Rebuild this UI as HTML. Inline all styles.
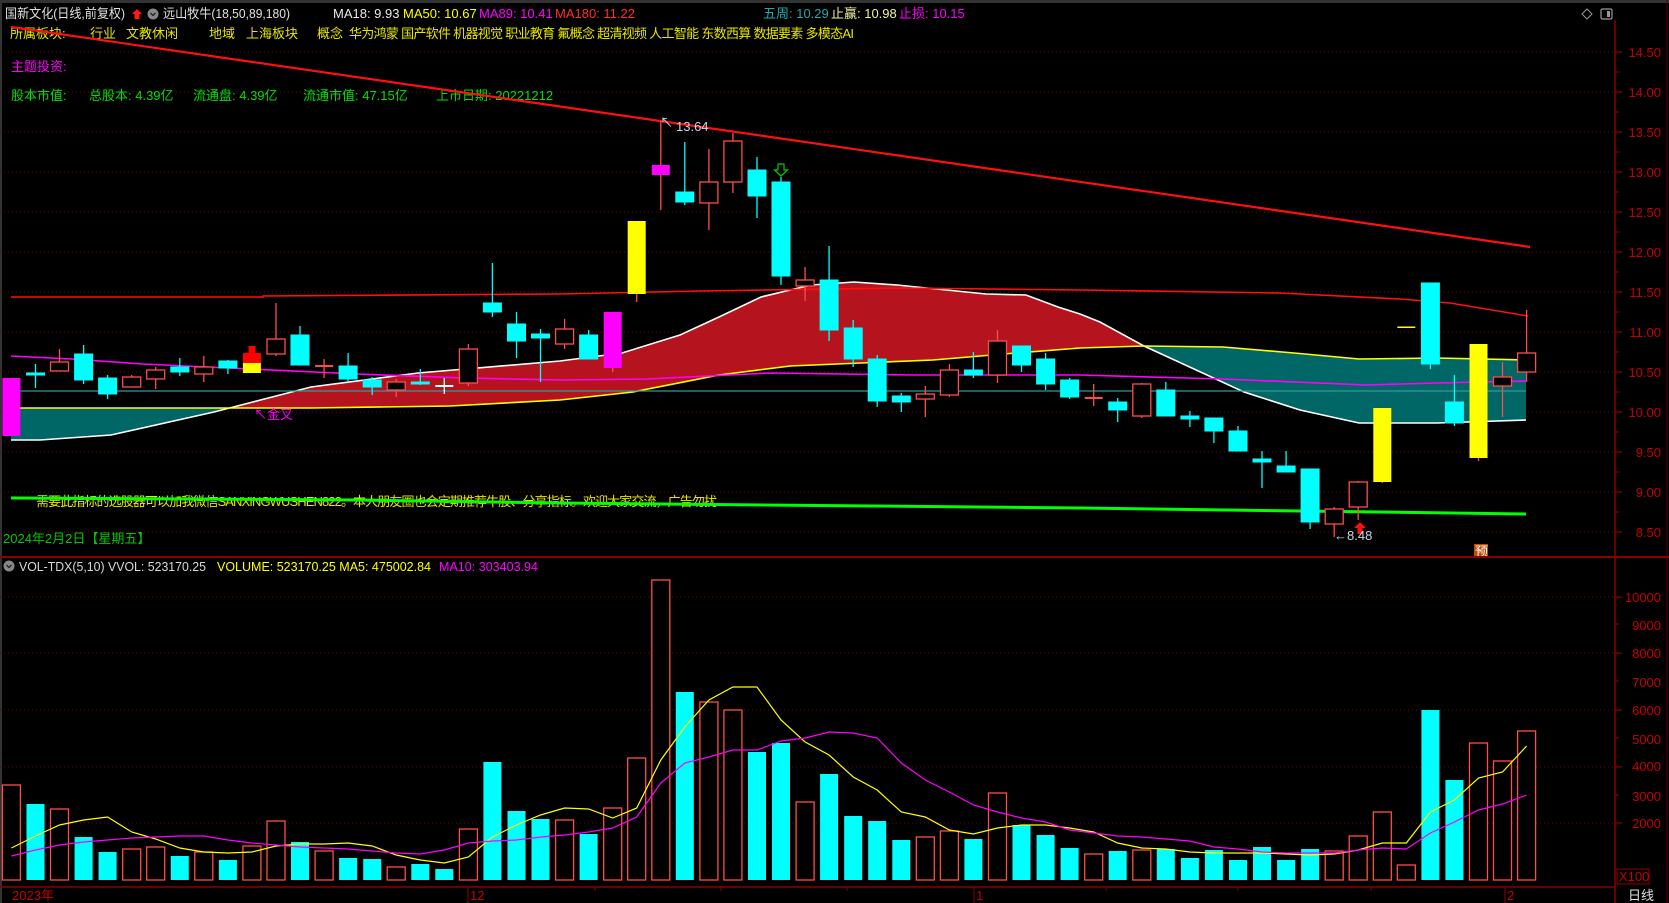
<!DOCTYPE html>
<html><head><meta charset="utf-8"><style>
html,body{margin:0;padding:0;background:#000;overflow:hidden}
svg{display:block}
text{font-family:"Liberation Sans","Noto Sans CJK SC",sans-serif;font-size:13px}
.c{fill:#00ffff;stroke:#00ffff;stroke-width:1}
.r{fill:#000;stroke:#ff4c4c;stroke-width:1.3}
.wc{stroke:#00ffff;stroke-width:1.3}
.wr{stroke:#ff4c4c;stroke-width:1.3}
.g{stroke:#7a0000;stroke-width:1;stroke-dasharray:1 3}
.lbl{fill:#c40000;font-size:14px;text-anchor:end}
</style></head><body>
<svg width="1669" height="903" viewBox="0 0 1669 903" xmlns="http://www.w3.org/2000/svg">
<rect width="1669" height="903" fill="#000"/>
<line x1="0" y1="1.5" x2="1669" y2="1.5" stroke="#333" stroke-width="3"/>
<line x1="1" y1="0" x2="1" y2="903" stroke="#333" stroke-width="2"/>

<g class="g">
<line x1="0" y1="52" x2="1613" y2="52"/><line x1="0" y1="92" x2="1613" y2="92"/><line x1="0" y1="132" x2="1613" y2="132"/><line x1="0" y1="172" x2="1613" y2="172"/><line x1="0" y1="212" x2="1613" y2="212"/><line x1="0" y1="252" x2="1613" y2="252"/><line x1="0" y1="292" x2="1613" y2="292"/><line x1="0" y1="332" x2="1613" y2="332"/><line x1="0" y1="372" x2="1613" y2="372"/><line x1="0" y1="412" x2="1613" y2="412"/><line x1="0" y1="452" x2="1613" y2="452"/><line x1="0" y1="492" x2="1613" y2="492"/><line x1="0" y1="532" x2="1613" y2="532"/>
<line x1="0" y1="597" x2="1613" y2="597"/><line x1="0" y1="653" x2="1613" y2="653"/><line x1="0" y1="710" x2="1613" y2="710"/><line x1="0" y1="767" x2="1613" y2="767"/><line x1="0" y1="823" x2="1613" y2="823"/>
</g>

<text x="5" y="18" fill="#e0e0e0" textLength="120" lengthAdjust="spacingAndGlyphs">国新文化(日线,前复权)</text>
<path d="M137 9 L142 14 L139.5 14 L139.5 19 L134.5 19 L134.5 14 L132 14 Z" fill="#ff1a1a"/>
<circle cx="153" cy="14" r="5.5" fill="#888"/><path d="M150.5 13 L153 15.5 L155.5 13" stroke="#222" stroke-width="1.3" fill="none"/>
<text x="163" y="18" fill="#e0e0e0" textLength="127" lengthAdjust="spacingAndGlyphs">远山牧牛(18,50,89,180)</text>
<text x="333" y="18" fill="#e8e8e8">MA18: 9.93</text>
<text x="403" y="18" fill="#ffff00">MA50: 10.67</text>
<text x="479" y="18" fill="#ff00ff">MA89: 10.41</text>
<text x="555" y="18" fill="#ff3030">MA180: 11.22</text>
<text x="763" y="18" fill="#22aaaa">五周: 10.29</text>
<text x="831" y="18" fill="#f0f0a0">止赢: 10.98</text>
<text x="899" y="18" fill="#ff00ff">止损: 10.15</text>
<path d="M1587 9 L1592 14 L1587 19 L1582 14 Z" fill="none" stroke="#999" stroke-width="1"/>
<rect x="1601" y="9" width="11" height="10" rx="1.5" fill="none" stroke="#999" stroke-width="1.2"/><rect x="1607" y="11" width="3" height="6" fill="#999"/>

<g fill="#e6e600">
<text x="10" y="38">所属板块:</text><text x="90" y="38">行业</text><text x="126" y="38">文教休闲</text><text x="209" y="38">地域</text><text x="246" y="38">上海板块</text><text x="317" y="38">概念</text>
<text x="349" y="38" textLength="505">华为鸿蒙 国产软件 机器视觉 职业教育 氟概念 超清视频 人工智能 东数西算 数据要素 多模态AI</text>
</g>
<text x="11" y="71" fill="#ff00ff">主题投资:</text>
<g fill="#00e000">
<text x="11" y="100">股本市值:</text><text x="89" y="100">总股本: 4.39亿</text><text x="193" y="100">流通盘:  4.39亿</text><text x="303" y="100">流通市值:  47.15亿</text><text x="436" y="100">上市日期: 20221212</text>
</g>

<clipPath id="cr"><rect x="230" y="0" width="914" height="560"/></clipPath>
<clipPath id="ct"><rect x="0" y="0" width="230" height="560"/><rect x="1144" y="0" width="400" height="560"/></clipPath>
<g>
<polygon clip-path="url(#ct)" fill="#006666" points="11,440 40,440 111,435 214,412 311,387 418,373 560,361 622,353 680,335 719,317 761,297 811,285 854,282 897,285 986,294 1026,295 1058,307 1080,314 1100,322 1144,346 1244,392 1300,410 1359,423 1437,423 1526,420 1526,360 1437,358 1359,359 1294,353 1223,347 1144,346 1080,348 1004,354 933,360 861,363 790,366 719,375 633,392 560,400 450,406 311,408 11,408"/>
<polygon clip-path="url(#cr)" fill="#b5141e" points="11,440 40,440 111,435 214,412 311,387 418,373 560,361 622,353 680,335 719,317 761,297 811,285 854,282 897,285 986,294 1026,295 1058,307 1080,314 1100,322 1144,346 1244,392 1300,410 1359,423 1437,423 1526,420 1526,360 1437,358 1359,359 1294,353 1223,347 1144,346 1080,348 1004,354 933,360 861,363 790,366 719,375 633,392 560,400 450,406 311,408 11,408"/>
</g>
<polyline fill="none" stroke="#ffffff" stroke-width="1.6" points="11,440 40,440 111,435 214,412 311,387 418,373 560,361 622,353 680,335 719,317 761,297 811,285 854,282 897,285 986,294 1026,295 1058,307 1080,314 1100,322 1144,346 1244,392 1300,410 1359,423 1437,423 1526,420"/>
<polyline fill="none" stroke="#ffff00" stroke-width="1.6" points="11,408 311,408 450,406 560,400 633,392 719,375 790,366 861,363 933,360 1004,354 1080,348 1144,346 1223,347 1294,353 1359,359 1437,358 1526,360"/>
<polyline fill="none" stroke="#ff00ff" stroke-width="1.6" points="11,356 71,359 143,364 250,369 357,374 464,378 560,380 647,379 769,373 915,375 1080,375 1223,379 1366,385 1437,383 1526,381"/>
<line x1="11" y1="391" x2="1526" y2="391" stroke="#2a9d9d" stroke-width="1.3"/>
<polyline fill="none" stroke="#ff1010" stroke-width="1.6" points="11,297 263,297 263,296 560,294 700,291 900,288 1080,290 1280,293 1400,299 1450,303 1528,316"/>
<line x1="11" y1="27" x2="1530" y2="247" stroke="#ff1010" stroke-width="2.2"/>

<text x="36" y="506" fill="#e6e600" textLength="681">需要此指标的选股器可以加我微信SANXINGWUSHEN822。本人朋友圈也会定期推荐牛股、分享指标。欢迎大家交流，广告勿扰</text>
<polyline fill="none" stroke="#00ff00" stroke-width="3" points="11,498 357,500 560,503 1080,508 1300,511 1526,514"/>
<text x="3" y="543" fill="#00c800">2024年2月2日【星期五】</text>
<text x="254" y="419" fill="#ff00ff">↖金叉</text>

<rect x="2.4" y="378" width="18" height="58" fill="#ff00ff"/>
<line class="wc" x1="35.5" y1="364" x2="35.5" y2="388"/><rect class="c" x="26.5" y="373" width="18" height="2"/>
<line class="wr" x1="59.5" y1="349" x2="59.5" y2="371"/><rect class="r" x="50.5" y="362" width="18" height="9"/>
<line class="wc" x1="83.6" y1="345" x2="83.6" y2="384"/><rect class="c" x="74.6" y="354" width="18" height="26"/>
<line class="wc" x1="107.6" y1="375" x2="107.6" y2="399"/><rect class="c" x="98.6" y="378" width="18" height="16"/>
<line class="wr" x1="131.7" y1="375" x2="131.7" y2="387"/><rect class="r" x="122.7" y="377" width="18" height="10"/>
<line class="wr" x1="155.7" y1="367" x2="155.7" y2="389"/><rect class="r" x="146.7" y="370" width="18" height="9"/>
<line class="wc" x1="179.8" y1="358" x2="179.8" y2="376"/><rect class="c" x="170.8" y="367" width="18" height="5"/>
<line class="wr" x1="203.8" y1="356" x2="203.8" y2="382"/><rect class="r" x="194.8" y="367" width="18" height="7"/>
<line class="wc" x1="227.9" y1="360" x2="227.9" y2="374"/><rect class="c" x="218.9" y="361" width="18" height="7"/>
<rect x="248.5" y="346" width="7" height="7" fill="#ff0000"/><rect x="242.9" y="353" width="18" height="10" fill="#ff0000"/><rect x="242.9" y="363" width="18" height="10" fill="#ffff00"/>
<line class="wr" x1="276" y1="303" x2="276" y2="356"/><rect class="r" x="267" y="339" width="18" height="15"/>
<line class="wc" x1="300" y1="326" x2="300" y2="365"/><rect class="c" x="291" y="335" width="18" height="30"/>
<line class="wr" x1="324.1" y1="359" x2="324.1" y2="378"/><rect x="315.1" y="365" width="18" height="2" fill="#ff4c4c"/>
<line class="wc" x1="348.1" y1="353" x2="348.1" y2="382"/><rect class="c" x="339.1" y="366" width="18" height="13"/>
<line class="wc" x1="372.2" y1="377" x2="372.2" y2="395"/><rect class="c" x="363.2" y="380" width="18" height="7"/>
<line class="wr" x1="396.2" y1="379" x2="396.2" y2="397"/><rect class="r" x="387.2" y="382" width="18" height="8"/>
<line class="wc" x1="420.3" y1="369" x2="420.3" y2="385"/><rect class="c" x="411.3" y="382" width="18" height="2"/>
<line stroke="#fff" stroke-width="1.3" x1="444.3" y1="378" x2="444.3" y2="394"/><rect x="435.3" y="385" width="18" height="2" fill="#fff"/>
<line class="wr" x1="468.4" y1="344" x2="468.4" y2="386"/><rect class="r" x="459.4" y="349" width="18" height="34"/>
<line class="wc" x1="492.4" y1="263" x2="492.4" y2="317"/><rect class="c" x="483.4" y="303" width="18" height="9"/>
<line class="wc" x1="516.5" y1="312" x2="516.5" y2="358"/><rect class="c" x="507.5" y="324" width="18" height="17"/>
<line class="wc" x1="540.5" y1="329" x2="540.5" y2="382"/><rect class="c" x="531.5" y="334" width="18" height="4"/>
<line class="wr" x1="564.6" y1="319" x2="564.6" y2="349"/><rect class="r" x="555.6" y="329" width="18" height="15"/>
<line class="wc" x1="588.6" y1="330" x2="588.6" y2="359"/><rect class="c" x="579.6" y="335" width="18" height="24"/>
<line stroke="#ff4c4c" stroke-width="1.3" x1="612.7" y1="312" x2="612.7" y2="372"/><rect x="603.7" y="312" width="18" height="56" fill="#ff00ff"/>
<line class="wr" x1="636.7" y1="221" x2="636.7" y2="302"/><rect x="627.7" y="221" width="18" height="73" fill="#ffff00"/>
<line class="wr" x1="660.8" y1="121" x2="660.8" y2="210"/><rect x="651.8" y="165" width="18" height="10" fill="#ff00ff"/>
<line class="wc" x1="684.8" y1="142" x2="684.8" y2="205"/><rect class="c" x="675.8" y="192" width="18" height="10"/>
<line class="wr" x1="708.9" y1="149" x2="708.9" y2="230"/><rect class="r" x="699.9" y="182" width="18" height="21"/>
<line class="wr" x1="732.9" y1="133" x2="732.9" y2="193"/><rect class="r" x="723.9" y="141" width="18" height="41"/>
<line class="wc" x1="757" y1="157" x2="757" y2="218"/><rect class="c" x="748" y="170" width="18" height="26"/>
<line class="wc" x1="781" y1="177" x2="781" y2="285"/><rect class="c" x="772" y="182" width="18" height="94"/>
<line class="wr" x1="805.1" y1="267" x2="805.1" y2="301"/><rect class="r" x="796.1" y="280" width="18" height="6"/>
<line class="wc" x1="829.1" y1="246" x2="829.1" y2="341"/><rect class="c" x="820.1" y="280" width="18" height="50"/>
<line class="wc" x1="853.2" y1="320" x2="853.2" y2="367"/><rect class="c" x="844.2" y="328" width="18" height="31"/>
<line class="wc" x1="877.2" y1="355" x2="877.2" y2="407"/><rect class="c" x="868.2" y="359" width="18" height="42"/>
<line class="wc" x1="901.3" y1="393" x2="901.3" y2="412"/><rect class="c" x="892.3" y="396" width="18" height="6"/>
<line class="wr" x1="925.3" y1="386" x2="925.3" y2="417"/><rect class="r" x="916.3" y="394" width="18" height="5"/>
<line class="wr" x1="949.4" y1="364" x2="949.4" y2="397"/><rect class="r" x="940.4" y="370" width="18" height="25"/>
<line class="wc" x1="973.4" y1="352" x2="973.4" y2="378"/><rect class="c" x="964.4" y="370" width="18" height="5"/>
<line class="wr" x1="997.5" y1="330" x2="997.5" y2="383"/><rect class="r" x="988.5" y="341" width="18" height="34"/>
<line class="wc" x1="1021.5" y1="346" x2="1021.5" y2="372"/><rect class="c" x="1012.5" y="346" width="18" height="19"/>
<line class="wc" x1="1045.6" y1="353" x2="1045.6" y2="390"/><rect class="c" x="1036.6" y="359" width="18" height="25"/>
<line class="wc" x1="1069.6" y1="378" x2="1069.6" y2="399"/><rect class="c" x="1060.6" y="380" width="18" height="17"/>
<line class="wr" x1="1093.7" y1="384" x2="1093.7" y2="406"/><rect x="1084.7" y="397" width="18" height="2" fill="#ff4c4c"/>
<line class="wc" x1="1117.7" y1="398" x2="1117.7" y2="422"/><rect class="c" x="1108.7" y="402" width="18" height="8"/>
<line class="wr" x1="1141.8" y1="383" x2="1141.8" y2="418"/><rect class="r" x="1132.8" y="384" width="18" height="32"/>
<line class="wc" x1="1165.8" y1="382" x2="1165.8" y2="416"/><rect class="c" x="1156.8" y="390" width="18" height="26"/>
<line class="wc" x1="1189.9" y1="411" x2="1189.9" y2="427"/><rect class="c" x="1180.9" y="416" width="18" height="3"/>
<line class="wc" x1="1213.9" y1="418" x2="1213.9" y2="443"/><rect class="c" x="1204.9" y="418" width="18" height="13"/>
<line class="wc" x1="1238" y1="426" x2="1238" y2="451"/><rect class="c" x="1229" y="431" width="18" height="20"/>
<line class="wc" x1="1262" y1="451" x2="1262" y2="488"/><rect class="c" x="1253" y="459" width="18" height="3"/>
<line class="wc" x1="1286.1" y1="451" x2="1286.1" y2="472"/><rect class="c" x="1277.1" y="466" width="18" height="6"/>
<line class="wc" x1="1310.1" y1="469" x2="1310.1" y2="529"/><rect class="c" x="1301.1" y="469" width="18" height="53"/>
<line class="wr" x1="1334.2" y1="507" x2="1334.2" y2="537"/><rect class="r" x="1325.2" y="509" width="18" height="15"/>
<line class="wr" x1="1358.2" y1="481" x2="1358.2" y2="520"/><rect class="r" x="1349.2" y="482" width="18" height="25"/>
<line class="wr" x1="1382.3" y1="408" x2="1382.3" y2="483"/><rect x="1373.3" y="408" width="18" height="74" fill="#ffff00"/>
<rect x="1397.3" y="326.5" width="18" height="1.5" fill="#ffff00"/>
<line class="wc" x1="1430.4" y1="283" x2="1430.4" y2="369"/><rect class="c" x="1421.4" y="283" width="18" height="81"/>
<line class="wc" x1="1454.4" y1="375" x2="1454.4" y2="426"/><rect class="c" x="1445.4" y="402" width="18" height="21"/>
<line class="wr" x1="1478.5" y1="344" x2="1478.5" y2="461"/><rect x="1469.5" y="344" width="18" height="114" fill="#ffff00"/>
<line class="wr" x1="1502.5" y1="362" x2="1502.5" y2="417"/><rect class="r" x="1493.5" y="377" width="18" height="9"/>
<line class="wr" x1="1526.6" y1="310" x2="1526.6" y2="382"/><rect class="r" x="1517.6" y="353" width="18" height="19"/>

<text x="660" y="127" fill="#c8d4e8" font-size="12">↖</text><text x="676" y="131" fill="#c8d4e8">13.64</text>
<path d="M778 164 L784 164 L784 170 L787.5 170 L781 176 L774.5 170 L778 170 Z" fill="none" stroke="#00cc00" stroke-width="1.2"/>
<path d="M1360 522 L1366 528 L1362.5 528 L1362.5 534 L1357.5 534 L1357.5 528 L1354 528 Z" fill="#ff1010"/>
<text x="1334" y="540" fill="#c8d4e8">←8.48</text>
<rect x="1474" y="544" width="14" height="14" fill="#c04a00"/><text x="1475" y="556" fill="#fff" font-size="12">预</text>

<line x1="1615" y1="20" x2="1615" y2="903" stroke="#8b0000" stroke-width="1.5"/>
<line x1="1667" y1="0" x2="1667" y2="903" stroke="#5a0000" stroke-width="1"/>
<g stroke="#8b0000" stroke-width="1.2">
<line x1="1615" y1="52" x2="1622" y2="52"/><line x1="1615" y1="92" x2="1622" y2="92"/><line x1="1615" y1="132" x2="1622" y2="132"/><line x1="1615" y1="172" x2="1622" y2="172"/><line x1="1615" y1="212" x2="1622" y2="212"/><line x1="1615" y1="252" x2="1622" y2="252"/><line x1="1615" y1="292" x2="1622" y2="292"/><line x1="1615" y1="332" x2="1622" y2="332"/><line x1="1615" y1="372" x2="1622" y2="372"/><line x1="1615" y1="412" x2="1622" y2="412"/><line x1="1615" y1="452" x2="1622" y2="452"/><line x1="1615" y1="492" x2="1622" y2="492"/><line x1="1615" y1="532" x2="1622" y2="532"/>
<line x1="1615" y1="72" x2="1619" y2="72"/><line x1="1615" y1="112" x2="1619" y2="112"/><line x1="1615" y1="152" x2="1619" y2="152"/><line x1="1615" y1="192" x2="1619" y2="192"/><line x1="1615" y1="232" x2="1619" y2="232"/><line x1="1615" y1="272" x2="1619" y2="272"/><line x1="1615" y1="312" x2="1619" y2="312"/><line x1="1615" y1="352" x2="1619" y2="352"/><line x1="1615" y1="392" x2="1619" y2="392"/><line x1="1615" y1="432" x2="1619" y2="432"/><line x1="1615" y1="472" x2="1619" y2="472"/><line x1="1615" y1="512" x2="1619" y2="512"/>
<line x1="1615" y1="597" x2="1622" y2="597"/><line x1="1615" y1="624" x2="1619" y2="624"/><line x1="1615" y1="653" x2="1622" y2="653"/><line x1="1615" y1="681" x2="1619" y2="681"/><line x1="1615" y1="710" x2="1622" y2="710"/><line x1="1615" y1="738" x2="1619" y2="738"/><line x1="1615" y1="767" x2="1622" y2="767"/><line x1="1615" y1="795" x2="1619" y2="795"/><line x1="1615" y1="823" x2="1622" y2="823"/>
</g>
<g class="lbl">
<text x="1661" y="57">14.50</text><text x="1661" y="97">14.00</text><text x="1661" y="137">13.50</text><text x="1661" y="177">13.00</text><text x="1661" y="217">12.50</text><text x="1661" y="257">12.00</text><text x="1661" y="297">11.50</text><text x="1661" y="337">11.00</text><text x="1661" y="377">10.50</text><text x="1661" y="417">10.00</text><text x="1661" y="457">9.50</text><text x="1661" y="497">9.00</text><text x="1661" y="537">8.50</text>
<text x="1661" y="602">10000</text><text x="1661" y="630">9000</text><text x="1661" y="658">8000</text><text x="1661" y="687">7000</text><text x="1661" y="715">6000</text><text x="1661" y="744">5000</text><text x="1661" y="771">4000</text><text x="1661" y="801">3000</text><text x="1661" y="828">2000</text>
</g>
<rect x="1617" y="869" width="32" height="15" fill="none" stroke="#8b0000" stroke-width="1"/><text x="1619" y="881" fill="#c40000" font-size="12">X100</text>

<line x1="0" y1="557" x2="1669" y2="557" stroke="#8b0000" stroke-width="2"/>

<circle cx="9" cy="566" r="5.5" fill="#888"/><path d="M6.5 565 L9 567.5 L11.5 565" stroke="#222" stroke-width="1.3" fill="none"/>
<text x="19" y="571" fill="#d8d8d8" textLength="187" lengthAdjust="spacingAndGlyphs">VOL-TDX(5,10) VVOL: 523170.25</text>
<text x="217" y="571" fill="#ffff00" textLength="214" lengthAdjust="spacingAndGlyphs">VOLUME: 523170.25 MA5: 475002.84</text>
<text x="439" y="571" fill="#ff00ff" textLength="99" lengthAdjust="spacingAndGlyphs">MA10: 303403.94</text>

<g class="r">
<rect x="2.4" y="785" width="18" height="95"/><rect x="50.5" y="809" width="18" height="71"/><rect x="122.7" y="849" width="18" height="31"/><rect x="146.7" y="847" width="18" height="33"/><rect x="194.8" y="852" width="18" height="28"/><rect x="242.9" y="846" width="18" height="34"/><rect x="267" y="821" width="18" height="59"/><rect x="315.1" y="851" width="18" height="29"/><rect x="387.2" y="867" width="18" height="13"/><rect x="459.4" y="829" width="18" height="51"/><rect x="555.6" y="820" width="18" height="60"/><rect x="603.7" y="808" width="18" height="72"/><rect x="627.7" y="758" width="18" height="122"/><rect x="651.8" y="580" width="18" height="300"/><rect x="699.9" y="702" width="18" height="178"/><rect x="723.9" y="710" width="18" height="170"/><rect x="796.1" y="802" width="18" height="78"/><rect x="916.3" y="837" width="18" height="43"/><rect x="940.4" y="831" width="18" height="49"/><rect x="988.5" y="793" width="18" height="87"/><rect x="1084.7" y="854" width="18" height="26"/><rect x="1132.8" y="850" width="18" height="30"/><rect x="1325.2" y="851" width="18" height="29"/><rect x="1349.2" y="836" width="18" height="44"/><rect x="1373.3" y="812" width="18" height="68"/><rect x="1397.3" y="865" width="18" height="15"/><rect x="1469.5" y="743" width="18" height="137"/><rect x="1493.5" y="761" width="18" height="119"/><rect x="1517.6" y="731" width="18" height="149"/>
</g>
<g fill="#00ffff">
<rect x="26.5" y="804" width="18" height="76"/><rect x="74.6" y="837" width="18" height="43"/><rect x="98.6" y="852" width="18" height="28"/><rect x="170.8" y="856" width="18" height="24"/><rect x="218.9" y="860" width="18" height="20"/><rect x="291" y="842" width="18" height="38"/><rect x="339.1" y="858" width="18" height="22"/><rect x="363.2" y="859" width="18" height="21"/><rect x="411.3" y="864" width="18" height="16"/><rect x="435.3" y="869" width="18" height="11"/><rect x="483.4" y="762" width="18" height="118"/><rect x="507.5" y="811" width="18" height="69"/><rect x="531.5" y="819" width="18" height="61"/><rect x="579.6" y="834" width="18" height="46"/><rect x="675.8" y="692" width="18" height="188"/><rect x="748" y="752" width="18" height="128"/><rect x="772" y="743" width="18" height="137"/><rect x="820.1" y="774" width="18" height="106"/><rect x="844.2" y="816" width="18" height="64"/><rect x="868.2" y="821" width="18" height="59"/><rect x="892.3" y="840" width="18" height="40"/><rect x="964.4" y="839" width="18" height="41"/><rect x="1012.5" y="825" width="18" height="55"/><rect x="1036.6" y="835" width="18" height="45"/><rect x="1060.6" y="848" width="18" height="32"/><rect x="1108.7" y="851" width="18" height="29"/><rect x="1156.8" y="849" width="18" height="31"/><rect x="1180.9" y="858" width="18" height="22"/><rect x="1204.9" y="850" width="18" height="30"/><rect x="1229" y="860" width="18" height="20"/><rect x="1253" y="847" width="18" height="33"/><rect x="1277.1" y="860" width="18" height="20"/><rect x="1301.1" y="849" width="18" height="31"/><rect x="1421.4" y="710" width="18" height="170"/><rect x="1445.4" y="780" width="18" height="100"/>
</g>
<polyline fill="none" stroke="#ffff00" stroke-width="1.2" points="11.4,848 35.5,836 59.5,825 83.6,820 107.6,817 131.7,832 155.7,839 179.8,848 203.8,852 227.9,853 251.9,852 276,846 300,844 324.1,844 348.1,843 372.2,846 396.2,855 420.3,860 444.3,863 468.4,857 492.4,837 516.5,825 540.5,815 564.6,808 588.6,809 612.7,818 636.7,808 660.8,760 684.8,727 708.9,700 732.9,687 757,687 781,720 805.1,742 829.1,755 853.2,777 877.2,790 901.3,812 925.3,817 949.4,830 973.4,834 997.5,828 1021.5,825 1045.6,825 1069.6,828 1093.7,832 1117.7,843 1141.8,848 1165.8,849 1189.9,852 1213.9,853 1238,853 1262,853 1286.1,854 1310.1,855 1334.2,854 1358.2,850 1382.3,843 1406.3,843 1430.4,812 1454.4,800 1478.5,778 1502.5,772 1526.6,746"/>
<polyline fill="none" stroke="#ff00ff" stroke-width="1.2" points="11.4,856 35.5,850 59.5,845 83.6,842 107.6,840 131.7,838 155.7,837 179.8,836 203.8,836 227.9,840 251.9,843 276,845 300,847 324.1,848 348.1,849 372.2,851 396.2,853 420.3,854 444.3,850 468.4,843 492.4,841 516.5,840 540.5,837 564.6,835 588.6,832 612.7,828 636.7,817 660.8,783 684.8,763 708.9,757 732.9,750 757,750 781,741 805.1,738 829.1,732 853.2,733 877.2,738 901.3,763 925.3,780 949.4,792 973.4,805 997.5,812 1021.5,818 1045.6,822 1069.6,830 1093.7,833 1117.7,836 1141.8,837 1165.8,839 1189.9,841 1213.9,847 1238,849 1262,852 1286.1,853 1310.1,853 1334.2,853 1358.2,850 1382.3,848 1406.3,849 1430.4,833 1454.4,822 1478.5,810 1502.5,804 1526.6,795"/>

<line x1="0" y1="887" x2="1615" y2="887" stroke="#8b0000" stroke-width="1.5"/>
<g stroke="#8b0000" stroke-width="1">
<line x1="468" y1="887" x2="468" y2="903"/><line x1="974" y1="887" x2="974" y2="903"/><line x1="1505" y1="887" x2="1505" y2="903"/>
<line x1="595" y1="887" x2="595" y2="891"/><line x1="721" y1="887" x2="721" y2="891"/><line x1="847" y1="887" x2="847" y2="891"/><line x1="1106" y1="887" x2="1106" y2="891"/><line x1="1238" y1="887" x2="1238" y2="891"/><line x1="1371" y1="887" x2="1371" y2="891"/>
</g>
<g fill="#c40000" font-size="13">
<text x="12" y="900">2023年</text><text x="470" y="900">12</text><text x="976" y="900">1</text><text x="1507" y="900">2</text>
</g>
<text x="1628" y="900" fill="#e0e0e0">日线</text>
</svg>
</body></html>
